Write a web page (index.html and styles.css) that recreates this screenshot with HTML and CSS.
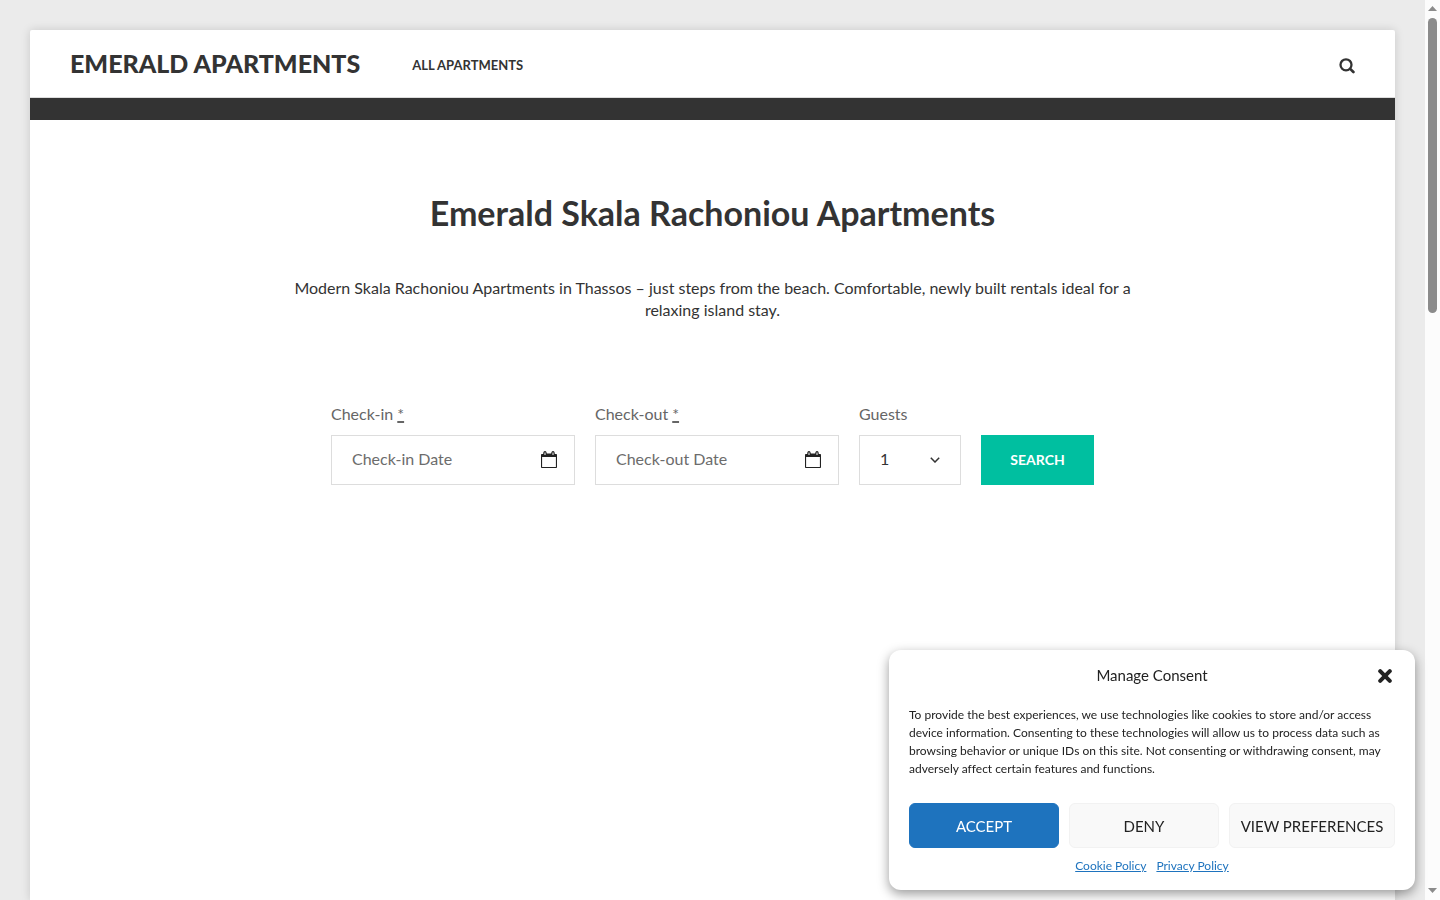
FILE: index.html
```html
<!DOCTYPE html>
<html lang="en">
<head>
<meta charset="utf-8">
<meta name="viewport" content="width=device-width, initial-scale=1">
<title>Emerald Apartments</title>
<link rel="stylesheet" href="styles.css">
</head>
<body>
<div class="viewport">
  <div class="page">
    <div class="site">
      <header class="site-header">
        <a class="site-title" href="#">EMERALD APARTMENTS</a>
        <nav class="site-nav"><a class="nav-link" href="#">ALL APARTMENTS</a></nav>
        <button class="search-toggle" type="button" aria-label="Search">
          <svg width="16" height="16" viewBox="0 0 16 16" fill="none" stroke="#333" aria-hidden="true"><circle cx="7" cy="6.8" r="5.5" stroke-width="2.3"/><path d="M11.2 10.9L14.4 14" stroke-width="2.7" stroke-linecap="round"/></svg>
        </button>
      </header>
      <div class="band"></div>
      <main class="content">
        <h1 class="title">Emerald Skala Rachoniou Apartments</h1>
        <p class="intro">Modern Skala Rachoniou Apartments in Thassos – just steps from the beach. Comfortable, newly built rentals ideal for a relaxing island stay.</p>
        <form class="booking">
          <div class="field field-date">
            <label class="label" for="check-in">Check-in <abbr class="required" title="Required">*</abbr></label>
            <div class="control">
              <input class="input" id="check-in" type="text" placeholder="Check-in Date">
              <svg class="calendar" width="16" height="17" viewBox="0 0 16 17" aria-hidden="true"><path fill="#222" fill-rule="evenodd" d="M0.8 3H2.2C2.2 1 2.8 0 4 0S5.6 1 5.8 2.6H10.2C10.4 1 10.8 0 12 0S13.8 1 13.8 3H15.2Q16 3 16 3.8V16.2Q16 17 15.2 17H0.8Q0 17 0 16.2V3.8Q0 3 0.8 3ZM1.1 6V15.9H14.9V6ZM3.5 1.4V4H4.5V1.4ZM11.5 1.4V4H12.5V1.4Z"/></svg>
            </div>
          </div>
          <div class="field field-date">
            <label class="label" for="check-out">Check-out <abbr class="required" title="Required">*</abbr></label>
            <div class="control">
              <input class="input" id="check-out" type="text" placeholder="Check-out Date">
              <svg class="calendar" width="16" height="17" viewBox="0 0 16 17" aria-hidden="true"><path fill="#222" fill-rule="evenodd" d="M0.8 3H2.2C2.2 1 2.8 0 4 0S5.6 1 5.8 2.6H10.2C10.4 1 10.8 0 12 0S13.8 1 13.8 3H15.2Q16 3 16 3.8V16.2Q16 17 15.2 17H0.8Q0 17 0 16.2V3.8Q0 3 0.8 3ZM1.1 6V15.9H14.9V6ZM3.5 1.4V4H4.5V1.4ZM11.5 1.4V4H12.5V1.4Z"/></svg>
            </div>
          </div>
          <div class="field field-guests">
            <label class="label" for="guests">Guests</label>
            <div class="control">
              <select class="select" id="guests"><option>1</option><option>2</option><option>3</option><option>4</option></select>
              <svg class="chevron" width="10" height="6" viewBox="0 0 10 6" fill="none" stroke="#333" stroke-width="1.5" aria-hidden="true"><path d="M0.8 0.8L5 5L9.2 0.8"/></svg>
            </div>
          </div>
          <button class="submit" type="submit">SEARCH</button>
        </form>
      </main>
    </div>
  </div>
  <div class="scrollbar" aria-hidden="true">
    <svg width="9" height="5" viewBox="0 0 9 5"><path fill="#8b8b8b" d="M4.5 0L9 5H0Z"/></svg>
    <div class="track"><div class="thumb"></div></div>
    <svg width="9" height="5" viewBox="0 0 9 5"><path fill="#8b8b8b" d="M0 0H9L4.5 5Z"/></svg>
  </div>
</div>
<section class="consent" role="dialog" aria-labelledby="consent-title">
  <div class="consent-head">
    <h2 class="consent-title" id="consent-title">Manage Consent</h2>
    <button class="close" type="button" aria-label="Close">
      <svg width="14" height="14" viewBox="0 0 14 14" stroke="#222" stroke-width="4" stroke-linecap="round" aria-hidden="true"><path d="M2.2 2.2L11.8 11.8M11.8 2.2L2.2 11.8"/></svg>
    </button>
  </div>
  <p class="consent-text">To provide the best experiences, we use technologies like cookies to store and/or access device information. Consenting to these technologies will allow us to process data such as browsing behavior or unique IDs on this site. Not consenting or withdrawing consent, may adversely affect certain features and functions.</p>
  <div class="consent-actions">
    <button class="btn btn-primary" type="button">ACCEPT</button>
    <button class="btn" type="button">DENY</button>
    <button class="btn" type="button">VIEW PREFERENCES</button>
  </div>
  <div class="consent-links"><a class="policy" href="#">Cookie Policy</a><a class="policy" href="#">Privacy Policy</a></div>
</section>
</body>
</html>
```
FILE: styles.css
```css
*, *::before, *::after { box-sizing: border-box; }
body { margin: 0; background: #ebebeb; color: #333; font-family: Lato, sans-serif; font-size: 16px; line-height: 22px; font-variant-ligatures: none; }
button, input, select { font: inherit; }
button { cursor: pointer; }

.viewport { display: flex; height: 100vh; overflow: hidden; }
.page { flex: 1; display: flex; padding: 30px 30px 0; }
.site { flex: 1; background: #fff; border-radius: 2px 2px 0 0; box-shadow: 0 0 10px rgba(0, 0, 0, 0.15); }

.site-header { display: flex; align-items: center; height: 68px; padding: 0 40px; border-bottom: 1px solid #ddd; }
.site-title { padding-bottom: 2px; color: #333; font-size: 25px; font-weight: 900; line-height: 32px; text-decoration: none; }
.site-nav { flex: 1; margin-left: 52px; padding-top: 2px; }
.nav-link { color: #333; font-size: 13px; font-weight: 700; text-decoration: none; }
.search-toggle { display: flex; padding: 4px 0 0; border: 0; background: none; }
.band { height: 22px; background: #333; }

.content { display: flex; flex-direction: column; align-items: center; padding: 70px 30px 0; }
.title { margin: 0; font-size: 34px; font-weight: 700; line-height: 46px; text-align: center; }
.intro { max-width: 850px; margin: 41px 0 0; text-align: center; }

.booking { display: flex; align-items: flex-end; gap: 20px; margin-top: 82px; }
.field { display: flex; flex-direction: column; gap: 10px; }
.field-date { width: 244px; }
.field-guests { width: 102px; }
.label { color: #666; }
.required { text-decoration: underline; text-decoration-thickness: 2px; }
.control { position: relative; }
.input, .select { display: block; width: 100%; height: 50px; padding: 0 20px 2px; border: 1px solid #ddd; border-radius: 0; background: #fff; color: #333; appearance: none; }
.input { padding-bottom: 3px; }
.input::placeholder { color: #6c6c6c; opacity: 1; }
.calendar { position: absolute; top: 16px; right: 18px; pointer-events: none; }
.chevron { position: absolute; top: 22px; right: 21px; pointer-events: none; }
.submit { width: 113px; height: 50px; padding: 0; border: 0; background: #00bfa0; color: #fff; font-size: 14px; font-weight: 700; }

.scrollbar { display: flex; flex-direction: column; align-items: center; width: 15px; padding: 6px 0 7px; background: #fcfcfc; }
.track { flex: 1; padding: 7px 0; }
.thumb { width: 9px; height: 295px; border-radius: 5px; background: #8b8b8b; }

.consent { position: fixed; right: 25px; bottom: 10px; width: 526px; padding: 10px 20px 15px; border-radius: 12px; background: #fff; color: #222; box-shadow: 0 4px 12px rgba(0, 0, 0, 0.4); }
.consent-head { display: grid; grid-template-columns: 20px 1fr 20px; align-items: center; height: 32px; }
.consent-title { grid-column: 2; margin: 0; padding-bottom: 2px; font-size: 15px; font-weight: 400; text-align: center; }
.close { display: flex; justify-content: center; padding: 0; border: 0; background: none; }
.consent-text { margin: 14px 0 25px; font-size: 12px; line-height: 18px; }
.consent-actions { display: flex; gap: 10px; }
.btn { flex: 1 0 auto; min-width: 150px; height: 45px; padding: 0 10px; border: 1px solid #f2f2f2; border-radius: 6px; background: #f9f9f9; color: #222; font-size: 15px; }
.btn-primary { border-color: #1e73be; background: #1e73be; color: #fff; }
.consent-links { display: flex; justify-content: center; gap: 10px; margin-top: 9px; line-height: 18px; }
.policy { color: #1e73be; font-size: 12px; }
```
